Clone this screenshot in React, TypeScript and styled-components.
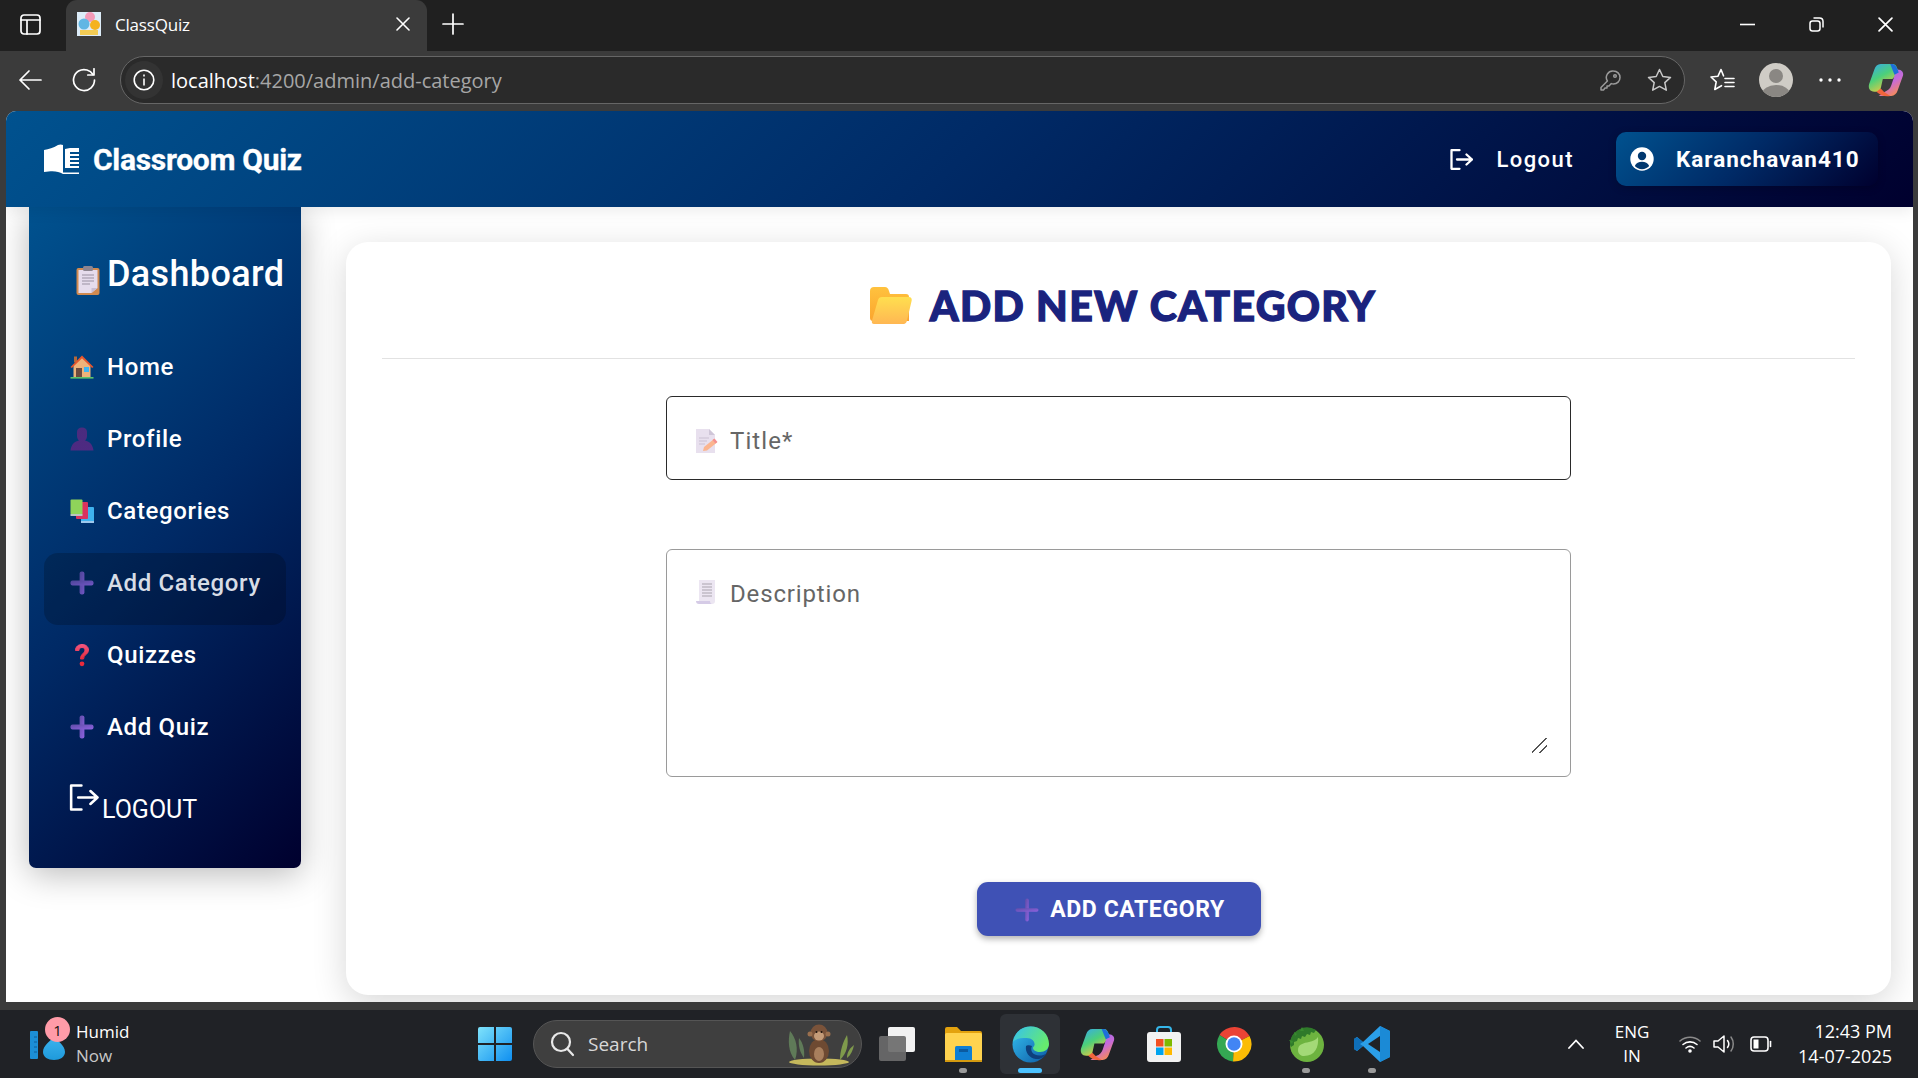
import React from "react";
import styled, { createGlobalStyle } from "styled-components";

const GlobalStyle = createGlobalStyle`
  html, body { margin: 0; padding: 0; height: 100%; overflow: hidden; background: #3b3b3b; }
  * { box-sizing: border-box; }
  #root { height: 100%; }
`;

const BRAND = "linear-gradient(135deg, #00528f 0%, #002a66 50%, #00002e 100%)";
const OS_FONT = `"Open Sans", "Noto Sans", sans-serif`;
const APP_FONT = `Roboto, "Liberation Sans", sans-serif`;

const Screen = styled.div`
  width: 1918px; height: 1078px; display: flex; flex-direction: column; background: #3b3b3b; overflow: hidden;
`;
const TabStrip = styled.div`
  height: 51px; background: #202020; display: flex; align-items: flex-end; color: #fff; font-family: ${OS_FONT};
`;
const TabAction = styled.div`
  width: 66px; height: 51px; display: flex; align-items: center; justify-content: center; padding: 0 6px 3px 0;
`;
const Tab = styled.div`
  width: 361px; height: 51px; background: #3b3b3b; border-radius: 11px 11px 0 0; display: flex; align-items: center;
  padding: 0 17px 3px 11px; gap: 14px; font-size: 17px; letter-spacing: -0.2px;
`;
const TabTitle = styled.span` flex: 1; `;
const NewTab = styled.div`
  width: 46px; margin-left: 3px; height: 51px; display: flex; align-items: center; justify-content: center; padding-bottom: 3px;
`;
const WindowControls = styled.div`
  margin-left: auto; display: flex; height: 51px; align-items: center; padding-right: 25px; gap: 54px; padding-bottom: 2px;
`;
const Toolbar = styled.div`
  height: 60px; display: flex; align-items: center; padding-left: 18px; padding-bottom: 2px;
`;
const NavGlyph = styled.div`
  width: 24px; height: 24px; margin-right: 30px; display: flex; align-items: center; justify-content: center;
  &:nth-child(2) { margin-right: 24px; }
`;
const AddressBar = styled.div`
  width: 1565px; height: 48px; border-radius: 24px; background: #2a2a2a; border: 1.5px solid #666;
  display: flex; align-items: center; padding: 0 12px 0 4px; font-family: ${OS_FONT}; font-size: 20px; letter-spacing: 0; color: #a6a6a6;
`;
const SiteInfo = styled.div`
  width: 38px; height: 38px; border-radius: 50%; background: #333; display: flex; align-items: center; justify-content: center; margin-right: 8px;
`;
const Host = styled.span` color: #fff; `;
const AddressEnd = styled.div`
  margin-left: auto; display: flex; align-items: center; gap: 26px;
`;
const ToolbarRight = styled.div`
  display: flex; align-items: center; margin-left: 25px; gap: 24px;
  & > :nth-child(3) { margin-left: 2px; margin-right: 3px; }
`;
const PageFrame = styled.div`
  flex: 1; padding: 0 5px 8px 6px; min-height: 0;
`;
const Page = styled.div`
  height: 891px; background: #fff; border-radius: 10px 10px 0 0; display: flex; flex-direction: column; overflow: hidden;
  font-family: ${APP_FONT};
`;
const Header = styled.header`
  height: 96px; flex: none; background: ${BRAND}; display: flex; align-items: center; padding: 0 35px 0 38px; color: #fff; position: relative; z-index: 2;
  box-shadow: 0 4px 14px rgba(0,0,0,.08);
`;
const Brand = styled.div`
  display: flex; align-items: center; gap: 14px; font-size: 30px; font-weight: 700; letter-spacing: -0.3px; -webkit-text-stroke: 0.3px #fff;
`;
const HeaderLogout = styled.div`
  margin-left: auto; display: flex; align-items: center; gap: 23px; font-size: 22px; font-weight: 500; letter-spacing: 1.45px; margin-right: 42px;
`;
const UserPill = styled.div`
  height: 54px; width: 262px; border-radius: 10px; background: ${BRAND}; display: flex; align-items: center; padding: 0 14px; gap: 22px;
  font-size: 22.5px; font-weight: 700; letter-spacing: 1px; box-shadow: 0 2px 8px rgba(0,0,0,.2); padding-bottom: 1px;
`;
const Body = styled.div`
  flex: 1; display: flex; align-items: flex-start; min-height: 0; background: #fff;
`;
const Sidebar = styled.aside`
  width: 272px; height: 661px; flex: none; margin-left: 23px; background: ${BRAND}; border-radius: 0 0 7px 7px;
  box-shadow: 0 6px 34px rgba(0,0,0,.28); padding: 0 15px; color: #fff; position: relative; z-index: 1;
`;
const SideTitle = styled.h2`
  margin: 0; height: 130px; display: flex; align-items: flex-start; font-size: 36px; font-weight: 500; letter-spacing: 0.35px; padding: 46px 0 0 32px; gap: 7px; line-height: 42px;
`;
const SideIcon = styled.span`
  display: inline-flex; padding-top: 13px;
`;
const NavList = styled.nav`
  display: flex; flex-direction: column;
`;
const NavItem = styled.div<{ $active?: boolean }>`
  height: 72px; display: flex; align-items: flex-start; padding: 12px 0 0 26px; gap: 13px; border-radius: 14px; font-size: 24px; font-weight: 500; letter-spacing: 0.65px; line-height: 36px;
  background: ${(p) => (p.$active ? "rgba(0,0,0,.2)" : "transparent")};
  color: ${(p) => (p.$active ? "#d7dde6" : "#fff")};
`;
const NavIconBox = styled.span<{ $dim?: boolean }>`
  width: 24px; height: 36px; display: flex; align-items: center; justify-content: center; flex: none; opacity: ${(p) => (p.$dim ? 0.8 : 1)};
`;
const SideLogout = styled.div`
  display: flex; align-items: flex-start; padding: 15px 0 0 25px; font-size: 25px; line-height: 28px; gap: 3px;
`;
const LogoutText = styled.span` padding-top: 12px; `;
const Main = styled.main`
  flex: 1; padding: 35px 22px 0 45px;
`;
const Card = styled.section`
  height: 753px; background: #fff; border-radius: 22px; box-shadow: 0 8px 34px rgba(0,0,0,.16); padding: 0 36px; display: flex; flex-direction: column; align-items: center;
`;
const CardTitle = styled.h1`
  width: 100%; height: 117px; margin: 0; border-bottom: 1.5px solid #e2e2e2; display: flex; align-items: center; justify-content: center; gap: 18px;
  font-family: Lato, "Liberation Sans", sans-serif; font-weight: 900; font-size: 41px; letter-spacing: 1.35px; color: #1a237e; padding: 10px 0 0 9px;
  -webkit-text-stroke: 1.3px #1a237e;
`;
const FieldBox = styled.label<{ $focused?: boolean }>`
  width: 905px; display: flex; align-items: center; gap: 12px; background: #fff;
  border: ${(p) => (p.$focused ? "1.6px solid #2a2a2a" : "1.5px solid #9a9a9a")}; border-radius: 6px;
`;
const TitleField = styled(FieldBox)`
  height: 84px; margin-top: 37px; padding: 5px 28px 0 27px;
`;
const DescField = styled(FieldBox)`
  height: 228px; margin-top: 69px; align-items: flex-start; padding: 30px 23px 23px 29px;
`;
const FieldInput = styled.input`
  flex: 1; border: 0; outline: 0; background: transparent; height: 36px; padding: 0; font: 400 24px ${APP_FONT}; letter-spacing: 1.1px; color: #333;
  &::placeholder { color: #666; opacity: 1; }
`;
const FieldArea = styled.textarea`
  flex: 1; align-self: stretch; border: 0; outline: 0; background: transparent; padding: 0; margin: -1px 0 0 2px; font: 400 24px/30px ${APP_FONT}; letter-spacing: 0.85px; color: #333; resize: vertical;
  &::placeholder { color: #666; opacity: 1; }
  &::-webkit-resizer {
    background:
      linear-gradient(135deg, transparent 72%, #555 72%, #555 78%, transparent 78%),
      linear-gradient(135deg, transparent 44%, #555 44%, #555 50%, transparent 50%);
  }
`;
const AddButton = styled.button`
  width: 284px; height: 54px; margin-top: 105px; border: 0; border-radius: 11px; background: #3f51b5; color: #fff; display: flex; align-items: center; justify-content: center; gap: 11px;
  font: 700 23px ${APP_FONT}; letter-spacing: 0.6px; box-shadow: 0 3px 6px rgba(0,0,0,.3); padding: 1px 0 0 3px;
`;
const Taskbar = styled.footer`
  height: 68px; flex: none; background: #202226; display: flex; align-items: center; color: #fff; font-family: ${OS_FONT};
`;
const Weather = styled.div`
  width: 465px; padding-left: 30px; display: flex; align-items: center; gap: 10px; position: relative;
`;
const WeatherBadge = styled.span`
  position: absolute; left: 45px; top: -3px; width: 25px; height: 25px; border-radius: 50%; background: #ff9ba8; color: #111; display: flex; align-items: center; justify-content: center; font-size: 15px;
`;
const WeatherText = styled.div`
  display: flex; flex-direction: column; font-size: 17px; line-height: 24px;
`;
const Muted = styled.span` color: #c8c8c8; `;
const TaskTile = styled.div<{ $active?: boolean; $gap?: number; $dot?: boolean }>`
  width: 60px; height: 60px; flex: none; border-radius: 6px; display: flex; align-items: center; justify-content: center; position: relative;
  margin-left: ${(p) => p.$gap ?? 7}px;
  background: ${(p) => (p.$active ? "#2e3136" : "transparent")};
  &::after {
    content: ${(p) => (p.$active || p.$dot ? '""' : "none")};
    position: absolute; bottom: 1px; left: 50%; transform: translateX(-50%);
    height: 5px; border-radius: 3px; width: ${(p) => (p.$active ? 24 : 8)}px;
    background: ${(p) => (p.$active ? "#4cc2ff" : "#9a9a9a")};
  }
`;
const SearchBox = styled.div`
  width: 329px; height: 48px; margin-left: 8px; margin-right: -1px; border-radius: 24px; background: #3f3f3f; border: 1.5px solid #555; display: flex; align-items: center; padding: 0 6px 0 16px; gap: 13px; font-size: 19px; color: #d8d8d8;
`;
const SearchArt = styled.span` margin-left: auto; display: flex; `;
const Tray = styled.div`
  margin-left: auto; display: flex; align-items: center; padding-right: 26px;
`;
const Caret = styled.span` display: flex; margin-right: 27px; `;
const Lang = styled.div`
  width: 40px; text-align: center; font-size: 17px; line-height: 24px; margin-right: 27px;
`;
const TrayIcons = styled.div`
  display: flex; align-items: center; gap: 12px; margin-right: 26px;
`;
const Clock = styled.div`
  text-align: right; font-size: 18px; line-height: 25px;
`;

const I = { fill: "none", stroke: "#fff", strokeWidth: 1.7, strokeLinecap: "round" as const, strokeLinejoin: "round" as const };

const Plus = ({ s = 24, thin = false }: { s?: number; thin?: boolean }) => (
  <svg width={s} height={s} viewBox="0 0 24 24">
    <defs><linearGradient id={thin ? "pt" : "pf"} x1="0" y1="0" x2="1" y2="1"><stop offset="0" stopColor="#5f4da8" /><stop offset="1" stopColor="#8f63e0" /></linearGradient></defs>
    <rect x={thin ? 10.2 : 9.6} y="0.5" width={thin ? 3.6 : 4.8} height="23" rx="2" fill={`url(#${thin ? "pt" : "pf"})`} />
    <rect x="0.5" y={thin ? 10.2 : 9.6} width="23" height={thin ? 3.6 : 4.8} rx="2" fill={`url(#${thin ? "pt" : "pf"})`} />
  </svg>
);
const Clipboard = () => (
  <svg width="24" height="29" viewBox="0 0 24 29">
    <rect x="0.5" y="2" width="23" height="27" rx="2" fill="#d08a50" />
    <path d="M2.5 4h19v18l-6 5H2.5z" fill="#e6dcec" />
    <path d="M15.5 27l6-5h-6z" fill="#c9bdd2" />
    <rect x="7" y="0" width="10" height="5" rx="1.5" fill="#8d8590" />
    <path d="M6 9h12M6 12h12M6 15h12M6 18h8" stroke="#9a91a2" strokeWidth="1" />
  </svg>
);
const House = () => (
  <svg width="24" height="24" viewBox="0 0 24 24">
    <rect x="4" y="1.5" width="3" height="6" fill="#b2683c" />
    <path d="M3.5 10.5L12 2.5l8.5 8v12h-17z" fill="#eeb27a" />
    <path d="M0.5 12L12 0.5 23.5 12l-1.4 1L12 3.2 1.9 13z" fill="#e8552c" />
    <rect x="6" y="13" width="6" height="9.5" fill="#6e4a3e" />
    <rect x="14" y="12" width="5" height="5" fill="#3db4f2" />
    <rect x="0.5" y="22" width="23" height="1.6" fill="#5ac26a" />
  </svg>
);
const Person = () => (
  <svg width="24" height="24" viewBox="0 0 24 24">
    <defs><linearGradient id="per" x1="0" y1="0" x2="0" y2="1"><stop offset="0" stopColor="#4a2c7e" /><stop offset="1" stopColor="#4e2a82" /></linearGradient></defs>
    <path d="M7 5c0-3 2-4.500 5-4.500s5 1.500 5 4.500v4c0 2-1 3.500-2 4.500 4 1 7.500 3 8.500 10H.5c1-7 4.500-9 8.500-10-1-1-2-2.500-2-4.500z" fill="url(#per)" />
  </svg>
);
const Books = () => (
  <svg width="24" height="24" viewBox="0 0 24 24">
    <rect x="11" y="8" width="13" height="16" rx="1" fill="#3fb2ee" />
    <rect x="6" y="3" width="12" height="17" rx="1" fill="#d9325f" />
    <rect x="0.500" y="0.500" width="12" height="15" rx="1" fill="#8fd45a" />
    <rect x="0.500" y="15" width="12" height="2" fill="#b9c4c0" />
    <rect x="11" y="22" width="13" height="2" fill="#9ec8ec" />
  </svg>
);
const Question = () => (
  <svg width="18" height="24" viewBox="0 0 18 24">
    <defs><linearGradient id="qq" x1="0" y1="0" x2="0" y2="1"><stop offset="0" stopColor="#f2557e" /><stop offset="1" stopColor="#e92b3c" /></linearGradient></defs>
    <path d="M2.500 7.500C2.500 3.500 5.500 1.500 9 1.500s6.500 2 6.500 5.500c0 4.500-5 4.500-5 9H7.500c0-5.500 4.500-5.500 4.500-9 0-1.500-1.200-2.500-3-2.500S6 5.500 6 7.500z" fill="url(#qq)" stroke="url(#qq)" strokeWidth="1" />
    <circle cx="9" cy="20.800" r="2.400" fill="#e92b3c" />
  </svg>
);
const ExitIcon = ({ w = 23, h = 21, sw = 2.3 }: { w?: number; h?: number; sw?: number }) => (
  <svg width={w} height={h} viewBox="0 0 23 21" fill="none" stroke="#fff" strokeWidth={sw} strokeLinecap="round" strokeLinejoin="round">
    <path d="M9.500 1.200H1.500v18.600h8" />
    <path d="M7 10.500h15M16.500 5.500l5.500 5-5.500 5" />
  </svg>
);
const UserCircle = () => (
  <svg width="24" height="24" viewBox="0 0 24 24">
    <circle cx="12" cy="12" r="11.700" fill="#fff" />
    <circle cx="12" cy="9" r="4.200" fill="#00386f" />
    <path d="M4.800 19c1.300-3 4-4.200 7.200-4.200s5.900 1.200 7.200 4.200c-1.800 2-4.300 3.200-7.200 3.200s-5.400-1.200-7.200-3.200z" fill="#00386f" />
  </svg>
);
const BookLogo = () => (
  <svg width="35" height="30" viewBox="0 0 35 30">
    <path d="M0 6c5-1 9-2 14-5 2-1 4-.5 5 0v29c-5-3-10-3.500-19-2z" fill="#fff" />
    <path d="M21 5l5-1v2h9v2h-9v2h9v2h-9v2h9v2h-9v2h9v2h-9v2h9v2H21z" fill="#fff" />
    <path d="M35 4v2h-9V4zM19 30h16v-1.500H19z" fill="#fff" />
  </svg>
);
const FolderIcon = () => (
  <svg width="42" height="37" viewBox="0 0 42 37">
    <defs>
      <linearGradient id="fb" x1="0" y1="0" x2="0" y2="1"><stop offset="0" stopColor="#ffc23e" /><stop offset="1" stopColor="#fba52e" /></linearGradient>
      <linearGradient id="ff" x1="0" y1="0" x2="0" y2="1"><stop offset="0" stopColor="#ffdf4f" /><stop offset="1" stopColor="#ffb753" /></linearGradient>
    </defs>
    <path d="M0 4C0 1.500 1.500 0 4 0h11c2 0 3 1 4 4l1 3h16c2 0 3 1 3 3v24H3c-2 0-3-1-3-3z" fill="url(#fb)" />
    <path d="M8 13c.5-2 2-3 4-3h27c2 0 3 1.500 2.700 3.500L37 33.500c-.5 2-1.500 3.500-3.500 3.500H4c-2 0-2.500-1.500-2-3.500z" fill="url(#ff)" />
  </svg>
);
const NoteIcon = () => (
  <svg width="24" height="24" viewBox="0 0 24 24">
    <path d="M2 0h13l6 6v18H2z" fill="#e8e0ee" />
    <path d="M15 0l6 6h-6z" fill="#cfc6d8" />
    <path d="M5 9h10M5 12h8M5 15h6" stroke="#c9c0d2" strokeWidth="1.200" />
    <path d="M9 22l1-4 10-8 3 3.500-10 8z" fill="#fbb58f" />
    <path d="M18.500 11l2-1.500 3 3.500-2 1.500z" fill="#f58f8f" />
  </svg>
);
const ReceiptIcon = () => (
  <svg width="20" height="24" viewBox="0 0 20 24">
    <path d="M3 0h16v21c0 2-1 3-3 3H3z" fill="#ece6f2" />
    <path d="M0 21h14c0 2 1 3 2 3H3c-2 0-3-1-3-3z" fill="#d5cbe6" />
    <path d="M6 4h10M6 7h10M6 10h10M6 13h10M6 16h10" stroke="#a9a4ae" strokeWidth="1.200" />
  </svg>
);
const SidebarToggleIcon = () => (
  <svg width="21" height="21" viewBox="0 0 21 21" {...I}><rect x="1" y="1" width="19" height="19" rx="3" /><path d="M1 6h19M7 6v14" /></svg>
);
const Favicon = () => (
  <svg width="24" height="24" viewBox="0 0 24 24">
    <rect width="24" height="24" fill="#dcecf8" />
    <circle cx="13" cy="5" r="5" fill="#f39ab8" />
    <circle cx="7" cy="12" r="5.500" fill="#61b6e4" />
    <circle cx="18" cy="13" r="5" fill="#f5b21e" />
    <rect x="3" y="18" width="18" height="5" fill="#f3cc55" />
  </svg>
);
const Close = ({ s = 14, w = 1.600 }: { s?: number; w?: number }) => (
  <svg width={s} height={s} viewBox="0 0 14 14" fill="none" stroke="#fff" strokeWidth={w} strokeLinecap="round"><path d="M1 1l12 12M13 1L1 13" /></svg>
);
const NewTabIcon = () => (<svg width="22" height="22" viewBox="0 0 22 22" fill="none" stroke="#fff" strokeWidth="1.700" strokeLinecap="round"><path d="M11 1v20M1 11h20" /></svg>);
const MinIcon = () => (<svg width="15" height="15" viewBox="0 0 15 15"><path d="M0 7.500h15" stroke="#fff" strokeWidth="1.600" /></svg>);
const RestoreIcon = () => (<svg width="15" height="15" viewBox="0 0 15 15" fill="none" stroke="#fff" strokeWidth="1.500"><rect x="1" y="4" width="10" height="10" rx="2.500" /><path d="M4.500 1h6c2.500 0 3.500 1 3.500 3.500v6" /></svg>);
const BackIcon = () => (<svg width="24" height="22" viewBox="0 0 24 22" fill="none" stroke="#fff" strokeWidth="1.700" strokeLinecap="round" strokeLinejoin="round"><path d="M23 11H2M11 2l-9 9 9 9" /></svg>);
const ReloadIcon = () => (<svg width="24" height="24" viewBox="0 0 24 24" fill="none" stroke="#fff" strokeWidth="1.700" strokeLinecap="round" strokeLinejoin="round"><path d="M22.500 12A10.500 10.500 0 1 1 15 2a10.500 10.500 0 0 1 6 4.500" /><path d="M22 0.800v6.200h-6.200" /></svg>);
const InfoIcon = () => (<svg width="22" height="22" viewBox="0 0 22 22" fill="none" stroke="#fff" strokeWidth="1.600"><circle cx="11" cy="11" r="9.800" /><path d="M11 9.500v7" /><path d="M11 5.500v2" /></svg>);
const KeyIcon = () => (<svg width="21" height="21" viewBox="0 0 21 21" fill="none" stroke="#9b9b9b" strokeWidth="1.500" strokeLinejoin="round"><path d="M13.500 1a6.500 6.500 0 0 1 0 13c-.8 0-1.500-.1-2.200-.4L9 16H7v2H5l-1.500 2H1v-2.500L7.400 11a6.500 6.500 0 0 1 6.100-10z" /><circle cx="15" cy="6" r="1.300" /></svg>);
const StarIcon = () => (<svg width="25" height="24" viewBox="0 0 25 24" fill="none" stroke="#c8c8c8" strokeWidth="1.500" strokeLinejoin="round"><path d="M12.500 1.500l3.300 7 7.700.9-5.700 5.200 1.500 7.600-6.800-3.800-6.800 3.800 1.500-7.600L1.500 9.400l7.700-.9z" /></svg>);
const FavIcon = () => (<svg width="25" height="24" viewBox="0 0 25 24" fill="none" stroke="#fff" strokeWidth="1.600" strokeLinejoin="round" strokeLinecap="round"><path d="M13.500 7.800L11 1.500 8 8.200l-7 .8 5.200 4.800L4.800 21.500l6.700-3.800" /><path d="M15 10.500h9M15 14.500h9M15 18.500h9" /></svg>);
const Avatar = () => (
  <svg width="34" height="34" viewBox="0 0 34 34">
    <defs><clipPath id="av"><circle cx="17" cy="17" r="17" /></clipPath></defs>
    <g clipPath="url(#av)"><rect width="34" height="34" fill="#cfccc6" /><circle cx="17" cy="13" r="7" fill="#8a8783" /><ellipse cx="17" cy="31" rx="14" ry="9" fill="#8a8783" /></g>
  </svg>
);
const Dots = () => (<svg width="22" height="4" viewBox="0 0 22 4" fill="#fff"><circle cx="2" cy="2" r="1.700" /><circle cx="11" cy="2" r="1.700" /><circle cx="20" cy="2" r="1.700" /></svg>);
const Copilot = ({ s = 34, id = "c" }: { s?: number; id?: string }) => (
  <svg width={s} height={s} viewBox="0 0 34 34">
    <defs>
      <linearGradient id={`${id}a`} x1="0" y1="0" x2="0.6" y2="1"><stop offset="0" stopColor="#36a8f0" /><stop offset="0.5" stopColor="#4cd07a" /><stop offset="1" stopColor="#f6c93b" /></linearGradient>
      <linearGradient id={`${id}b`} x1="0" y1="0" x2="0.6" y2="1"><stop offset="0" stopColor="#8a6cf0" /><stop offset="0.6" stopColor="#c86bd8" /><stop offset="1" stopColor="#f58a5a" /></linearGradient>
    </defs>
    <path d="M12 2h11c3 0 4 2 5 5l1 3-6 6H14l-2 9c-.5 2-2 3-4 3H6C2 28 0 25 1 21L6 7c1-3 3-5 6-5z" fill={`url(#${id}a)`} />
    <path d="M10 32h12c3 0 5-2 6-5l5-14c1-3-1-6-5-6h-1l-5 15c-1 3-3 5-6 6z" fill={`url(#${id}b)`} />
    <path d="M23 2c2 0 4 2 5 5l1 3-4 2-4-10z" fill="#1e6fd9" />
    <path d="M8 28c3 3 8 5 13 4l-6-4-3-3z" fill="#f0653c" />
  </svg>
);
const DropIcon = () => (
  <svg width="36" height="34" viewBox="0 0 36 34">
    <defs><linearGradient id="dp" x1="0" y1="0" x2="0" y2="1"><stop offset="0" stopColor="#3eb4ef" /><stop offset="1" stopColor="#1e9adb" /></linearGradient></defs>
    <rect x="0" y="4" width="8" height="28" rx="1" fill="#1c8fd6" />
    <path d="M4 10h3M4 15h3M4 20h3M4 25h3" stroke="#0d5f9c" strokeWidth="1" />
    <path d="M24 9c3 5 11 9 11 16 0 5-5 8-11 8s-11-3-11-8c0-7 8-11 11-16z" fill="url(#dp)" />
  </svg>
);
const WinLogo = () => (
  <svg width="36" height="36" viewBox="0 0 36 36">
    <defs><linearGradient id="wl" x1="0" y1="0" x2="1" y2="1"><stop offset="0" stopColor="#7fe3fb" /><stop offset="1" stopColor="#0f8ff0" /></linearGradient></defs>
    <path d="M1 3a2 2 0 0 1 2-2h14v16H1zM19 1h14a2 2 0 0 1 2 2v14H19zM1 19h16v16H3a2 2 0 0 1-2-2zM19 19h16v14a2 2 0 0 1-2 2H19z" fill="url(#wl)" />
  </svg>
);
const SearchGlyph = () => (<svg width="25" height="26" viewBox="0 0 25 26" fill="none" stroke="#e8e8e8" strokeWidth="2.200" strokeLinecap="round"><circle cx="11" cy="11" r="9" /><path d="M17.500 18l5.500 6" /></svg>);
const Monkey = () => (
  <svg width="70" height="44" viewBox="0 0 70 44">
    <ellipse cx="34" cy="40" rx="30" ry="3.500" fill="#c5b85c" />
    <path d="M10 38C3 30 3 18 5 9c6 7 9 18 5 29zM19 36c-4-6-6-12-5-20 4 5 6 12 5 20z" fill="#5f7a58" />
    <path d="M55 38c0-9 3-18 7-25 2 9 0 18-7 25zM62 36c0-6 3-10 7-13-1 5-3 10-7 13z" fill="#7f9a4c" />
    <ellipse cx="34" cy="29" rx="10" ry="12" fill="#6e4a32" />
    <circle cx="34" cy="11" r="8.500" fill="#7a533a" />
    <circle cx="25" cy="12" r="2.500" fill="#9a6f4e" /><circle cx="43" cy="12" r="2.500" fill="#9a6f4e" />
    <ellipse cx="34" cy="14" rx="5" ry="4.500" fill="#c49b78" />
    <circle cx="31.500" cy="10" r="1" fill="#1d120c" /><circle cx="36.500" cy="10" r="1" fill="#1d120c" />
    <ellipse cx="34" cy="32" rx="5" ry="7" fill="#a87f5d" />
  </svg>
);
const TaskViewIcon = () => (
  <svg width="36" height="35" viewBox="0 0 36 35">
    <rect x="9" y="0" width="27" height="25" rx="2" fill="#f2f2f2" />
    <rect x="0" y="9" width="27" height="25" rx="2" fill="#6b6b6b" fillOpacity=".92" />
  </svg>
);
const Explorer = () => (
  <svg width="37" height="35" viewBox="0 0 37 35">
    <path d="M0 2a2 2 0 0 1 2-2h10l4 4h19a2 2 0 0 1 2 2v6H0z" fill="#e3a20e" />
    <rect x="0" y="6" width="37" height="29" rx="1.500" fill="#ffd34f" />
    <rect x="10" y="19" width="17" height="16" rx="1.500" fill="#0f7fd4" />
    <rect x="14" y="22" width="9" height="3" fill="#0b5aa0" />
    <rect x="0" y="33" width="37" height="2" fill="#d49a10" />
  </svg>
);
const Edge = () => (
  <svg width="37" height="37" viewBox="0 0 37 37">
    <defs>
      <linearGradient id="e1" x1="0" y1="0" x2="1" y2="1"><stop offset="0" stopColor="#35c1f1" /><stop offset="1" stopColor="#0c59a4" /></linearGradient>
      <linearGradient id="e2" x1="0" y1="0" x2="1" y2="0.5"><stop offset="0" stopColor="#35c1f1" /><stop offset="1" stopColor="#66eb6e" /></linearGradient>
    </defs>
    <circle cx="18.500" cy="18.500" r="18" fill="url(#e1)" />
    <path d="M1 16C3 6 10 .5 18.500.5 29 .5 37 8 37 18c0 5-4 8-9 8-4 0-7-2-7-4 0-1 1-1.500 1.500-3 .5-3-2-7-8-7C8 12 3 13 1 16z" fill="url(#e2)" />
    <path d="M14 20c-1 6 3 12 10 13 4 .5 9-2 11-6-5 4-13 3-15-1-1-2-1-4 0-6-2-1-5-1-6 0z" fill="#0e3f7c" />
  </svg>
);
const Store = () => (
  <svg width="36" height="36" viewBox="0 0 36 36">
    <path d="M11 7V4c0-2 1-3 3-3h8c2 0 3 1 3 3v3" fill="none" stroke="#35b6e9" strokeWidth="2" />
    <rect x="1" y="6" width="34" height="30" rx="3" fill="#f2f2f2" />
    <rect x="10" y="13" width="7.500" height="7.500" fill="#f25022" />
    <rect x="18.500" y="13" width="7.500" height="7.500" fill="#7fba00" />
    <rect x="10" y="21.500" width="7.500" height="7.500" fill="#00a4ef" />
    <rect x="18.500" y="21.500" width="7.500" height="7.500" fill="#ffb900" />
  </svg>
);
const Chrome = () => (
  <svg width="36" height="36" viewBox="0 0 36 36">
    <path d="M18 18L3.500 9A17.500 17.500 0 0 1 33.500 10z" fill="#ea4335" />
    <path d="M18 18L3.500 9A17.500 17.500 0 0 0 17 35.500z" fill="#34a853" />
    <path d="M18 18L33.500 10A17.500 17.500 0 0 1 17 35.500z" fill="#fbbc05" />
    <circle cx="18" cy="18" r="8.500" fill="#fff" />
    <circle cx="18" cy="18" r="6.700" fill="#4285f4" />
  </svg>
);
const Spring = () => (
  <svg width="36" height="37" viewBox="0 0 36 37">
    <circle cx="19" cy="19" r="17" fill="#6db33f" />
    <path d="M2 19a17 17 0 0 1 26-15l-2 3-3-1-1 3-3-1-2 3-3-1-1 3-3-1-1 3-3 1v3l-3 2z" fill="#2f7a2a" />
    <path d="M6 6l3 2-2 2zM1 14l4 1-1 3zM14 1l2 4-4 0z" fill="#3a8a30" />
    <path d="M30 11c1 10-3 19-14 19-3 0-6-2-6-6 0-6 6-7 11-8 4-1 7-2 9-5z" fill="#a3d977" />
  </svg>
);
const VSCode = () => (
  <svg width="38" height="36" viewBox="0 0 38 36">
    <path d="M27 0l10 5v26l-10 5-17-16-6 5-3-2v-10l3-2 6 5z" fill="#2b9fe8" />
    <path d="M27 0v36l10-5V5z" fill="#1b8ad6" />
    <path d="M27 10L15 18l12 8z" fill="#202226" />
    <path d="M1 13l3-2 6 5-3 2 3 2-6 5-3-2z" fill="#0f6fb8" />
  </svg>
);
const CaretIcon = () => (<svg width="18" height="10" viewBox="0 0 18 10" fill="none" stroke="#fff" strokeWidth="1.800" strokeLinecap="round"><path d="M2 9l7-7.500L16 9" /></svg>);
const Wifi = () => (<svg width="22" height="18" viewBox="0 0 22 18" fill="none" stroke="#fff" strokeWidth="1.600" strokeLinecap="round"><path d="M1 6c5.500-5 14.500-5 20 0" stroke="#8a8a8a" /><path d="M4 9.500c4-3.500 10-3.500 14 0" /><path d="M7 13c2.500-2 5.500-2 8 0" /><circle cx="11" cy="16" r="1" fill="#fff" /></svg>);
const Volume = () => (<svg width="25" height="22" viewBox="0 0 25 22" fill="none" stroke="#fff" strokeWidth="1.500" strokeLinejoin="round" strokeLinecap="round"><path d="M1 8v6h4l6 5V3L5 8z" /><path d="M14.500 7.500c1.500 2 1.500 5 0 7" /><path d="M18 4c3 4 3 10 0 14" stroke="#8a8a8a" /></svg>);
const Battery = () => (<svg width="22" height="16" viewBox="0 0 22 16" fill="none" stroke="#fff" strokeWidth="1.600"><rect x="1" y="1" width="17" height="14" rx="3" /><rect x="3.500" y="3.500" width="5" height="9" fill="#fff" stroke="none" /><path d="M20.500 5.500v5" strokeLinecap="round" /></svg>);

const navItems: { label: string; icon: React.ReactNode; active?: boolean }[] = [
  { label: "Home", icon: <House /> },
  { label: "Profile", icon: <Person /> },
  { label: "Categories", icon: <Books /> },
  { label: "Add Category", icon: <Plus />, active: true },
  { label: "Quizzes", icon: <Question /> },
  { label: "Add Quiz", icon: <Plus /> },
];

export default function App() {
  return (
    <Screen>
      <GlobalStyle />
      <TabStrip>
        <TabAction><SidebarToggleIcon /></TabAction>
        <Tab>
          <Favicon />
          <TabTitle>ClassQuiz</TabTitle>
          <Close />
        </Tab>
        <NewTab><NewTabIcon /></NewTab>
        <WindowControls>
          <MinIcon />
          <RestoreIcon />
          <Close s={15} />
        </WindowControls>
      </TabStrip>
      <Toolbar>
        <NavGlyph><BackIcon /></NavGlyph>
        <NavGlyph><ReloadIcon /></NavGlyph>
        <AddressBar>
          <SiteInfo><InfoIcon /></SiteInfo>
          <span><Host>localhost</Host>:4200/admin/add-category</span>
          <AddressEnd><KeyIcon /><StarIcon /></AddressEnd>
        </AddressBar>
        <ToolbarRight>
          <FavIcon />
          <Avatar />
          <Dots />
          <Copilot id="tb" s={36} />
        </ToolbarRight>
      </Toolbar>
      <PageFrame>
        <Page>
          <Header>
            <Brand><BookLogo />Classroom Quiz</Brand>
            <HeaderLogout><ExitIcon />Logout</HeaderLogout>
            <UserPill><UserCircle />Karanchavan410</UserPill>
          </Header>
          <Body>
            <Sidebar>
              <SideTitle><SideIcon><Clipboard /></SideIcon>Dashboard</SideTitle>
              <NavList>
                {navItems.map((n) => (
                  <NavItem key={n.label} $active={n.active}>
                    <NavIconBox $dim={n.active}>{n.icon}</NavIconBox>
                    {n.label}
                  </NavItem>
                ))}
              </NavList>
              <SideLogout><ExitIcon w={30} h={27} sw={2} /><LogoutText>LOGOUT</LogoutText></SideLogout>
            </Sidebar>
            <Main>
              <Card>
                <CardTitle><FolderIcon />ADD NEW CATEGORY</CardTitle>
                <TitleField $focused>
                  <NoteIcon />
                  <FieldInput placeholder="Title*" />
                </TitleField>
                <DescField>
                  <ReceiptIcon />
                  <FieldArea placeholder="Description" />
                </DescField>
                <AddButton type="button"><Plus thin />ADD CATEGORY</AddButton>
              </Card>
            </Main>
          </Body>
        </Page>
      </PageFrame>
      <Taskbar>
        <Weather>
          <WeatherBadge>1</WeatherBadge>
          <DropIcon />
          <WeatherText>
            <span>Humid</span>
            <Muted>Now</Muted>
          </WeatherText>
        </Weather>
        <TaskTile $gap={0}><WinLogo /></TaskTile>
        <SearchBox>
          <SearchGlyph />
          Search
          <SearchArt><Monkey /></SearchArt>
        </SearchBox>
        <TaskTile $gap={6}><TaskViewIcon /></TaskTile>
        <TaskTile $gap={6} $dot><Explorer /></TaskTile>
        <TaskTile $active><Edge /></TaskTile>
        <TaskTile><Copilot s={35} id="tk" /></TaskTile>
        <TaskTile><Store /></TaskTile>
        <TaskTile $gap={10}><Chrome /></TaskTile>
        <TaskTile $gap={12} $dot><Spring /></TaskTile>
        <TaskTile $gap={6} $dot><VSCode /></TaskTile>
        <Tray>
          <Caret><CaretIcon /></Caret>
          <Lang>ENG<br />IN</Lang>
          <TrayIcons><Wifi /><Volume /><Battery /></TrayIcons>
          <Clock>12:43 PM<br />14-07-2025</Clock>
        </Tray>
      </Taskbar>
    </Screen>
  );
}
